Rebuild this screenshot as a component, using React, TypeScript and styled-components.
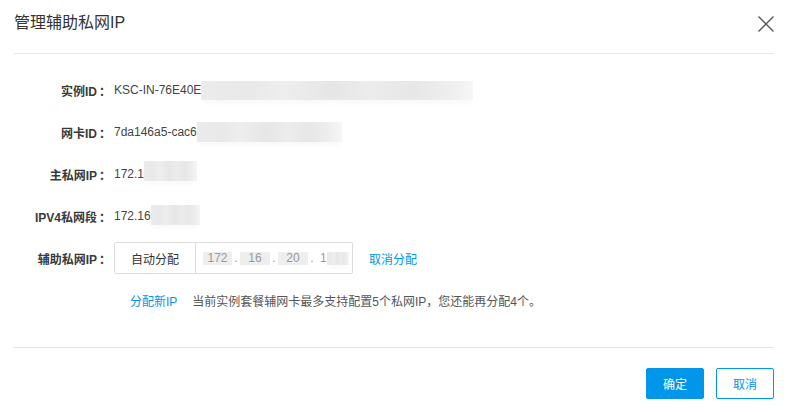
import React from "react";
import styled, { createGlobalStyle } from "styled-components";

const GlobalStyle = createGlobalStyle`
  html, body { margin: 0; padding: 0; background: #fff; }
  body { font-family: "Liberation Sans", "Noto Sans CJK SC", Arial, sans-serif; font-size: 12px; color: #333; }
`;

const BLUE = "#0096ea";

const Dialog = styled.div`
  width: 788px;
  height: 412px;
  background: #fff;
  box-sizing: border-box;
  padding: 0 14px;
  display: flex;
  flex-direction: column;
`;

const Header = styled.div`
  height: 54px;
  box-sizing: border-box;
  padding-top: 13px;
  border-bottom: 1px solid #e6e6e6;
  display: flex;
  justify-content: space-between;
  align-items: flex-start;
`;

const Title = styled.div`
  font-size: 16px;
  line-height: 20px;
  color: #333;
`;

const Close = styled.button`
  border: 0;
  background: none;
  padding: 0;
  margin: 3px 0 0 0;
  width: 16px;
  height: 16px;
  cursor: pointer;
  display: block;
  svg { display: block; }
`;

const Body = styled.div`
  padding: 15px 0 26px;
  border-bottom: 1px solid #e6e6e6;
  display: flex;
  flex-direction: column;
`;

const Row = styled.div`
  height: 42px;
  display: flex;
  align-items: center;
`;

const Label = styled.div`
  width: 97px;
  margin-right: 3px;
  text-align: right;
  color: #3a3a3a;
  font-weight: bold;
  white-space: nowrap;
`;

const Colon = styled.span`
  margin-left: 2px;
`;

const Value = styled.div`
  display: flex;
  align-items: center;
  color: #444;
  white-space: nowrap;
`;

const Blur = styled.span<{ $w: number; $h: number; $dy?: number }>`
  display: inline-block;
  width: ${(p) => p.$w}px;
  height: ${(p) => p.$h}px;
  position: relative;
  top: ${(p) => p.$dy ?? 0}px;
  background: linear-gradient(
    90deg,
    #ebebeb 0%,
    #e9e9e9 18%,
    #eeeeee 30%,
    #e6e6e6 48%,
    #ececec 62%,
    #e7e7e7 78%,
    #efefef 92%,
    #f6f6f6 100%
  );
  box-shadow: 0 6px 4px -2px #fafafa;
`;

const InputGroup = styled.div`
  display: flex;
  height: 32px;
  box-sizing: border-box;
  border: 1px solid #dcdcdc;
  border-radius: 2px;
`;

const AutoButton = styled.button`
  width: 81px;
  border: 0;
  border-right: 1px solid #dcdcdc;
  background: #fff;
  font: inherit;
  color: #333;
  padding: 0;
  cursor: pointer;
`;

const IpBox = styled.div`
  width: 156px;
  box-sizing: border-box;
  padding-left: 7px;
  display: flex;
  align-items: center;
  color: #999;
`;

const Seg = styled.span<{ $w: number }>`
  display: inline-flex;
  align-items: center;
  justify-content: center;
  width: ${(p) => p.$w}px;
  height: 13px;
  background: #eeeeee;
  color: #9a9a9a;
  font-size: 12px;
`;

const Dot = styled.span`
  width: 8px;
  text-align: center;
  color: #999;
`;

const LastSeg = styled.span`
  display: inline-flex;
  align-items: center;
  margin-left: 4px;
  color: #999;
`;

const Link = styled.a`
  color: ${BLUE};
  text-decoration: none;
  cursor: pointer;
  margin-left: 16px;
`;

const Hint = styled.span`
  color: #555;
  margin-left: 15px;
`;

const Footer = styled.div`
  padding-top: 20px;
  display: flex;
  justify-content: flex-end;
  gap: 12px;
`;

const Btn = styled.button<{ $primary?: boolean }>`
  width: 58px;
  height: 31px;
  box-sizing: border-box;
  border: 1px solid ${BLUE};
  border-radius: 2px;
  background: ${(p) => (p.$primary ? BLUE : "#fff")};
  color: ${(p) => (p.$primary ? "#fff" : BLUE)};
  font: inherit;
  font-size: 12px;
  padding: 0;
  cursor: pointer;
`;

function FieldLabel({ text }: { text: string }) {
  return (
    <Label>
      {text}
      <Colon>：</Colon>
    </Label>
  );
}

export default function App() {
  return (
    <>
      <GlobalStyle />
      <Dialog>
        <Header>
          <Title>管理辅助私网IP</Title>
          <Close aria-label="close">
            <svg width="16" height="16" viewBox="0 0 16 16">
              <path d="M0.5 0.5 L15.5 15.5 M15.5 0.5 L0.5 15.5" stroke="#555" strokeWidth="1.3" fill="none" />
            </svg>
          </Close>
        </Header>
        <Body>
          <Row>
            <FieldLabel text="实例ID" />
            <Value>
              KSC-IN-76E40E
              <Blur $w={272} $h={19} />
            </Value>
          </Row>
          <Row>
            <FieldLabel text="网卡ID" />
            <Value>
              7da146a5-cac6
              <Blur $w={145} $h={20} />
            </Value>
          </Row>
          <Row>
            <FieldLabel text="主私网IP" />
            <Value>
              172.1
              <Blur $w={53} $h={20} $dy={-3} />
            </Value>
          </Row>
          <Row>
            <FieldLabel text="IPV4私网段" />
            <Value>
              172.16
              <Blur $w={49} $h={20} $dy={-1} />
            </Value>
          </Row>
          <Row>
            <FieldLabel text="辅助私网IP" />
            <InputGroup>
              <AutoButton>自动分配</AutoButton>
              <IpBox>
                <Seg $w={29}>172</Seg>
                <Dot>.</Dot>
                <Seg $w={30}>16</Seg>
                <Dot>.</Dot>
                <Seg $w={30}>20</Seg>
                <Dot>.</Dot>
                <LastSeg>
                  1<Blur $w={22} $h={13} />
                </LastSeg>
              </IpBox>
            </InputGroup>
            <Link>取消分配</Link>
          </Row>
          <Row>
            <Label />
            <Link>分配新IP</Link>
            <Hint>当前实例套餐辅网卡最多支持配置5个私网IP，您还能再分配4个。</Hint>
          </Row>
        </Body>
        <Footer>
          <Btn $primary>确定</Btn>
          <Btn>取消</Btn>
        </Footer>
      </Dialog>
    </>
  );
}
